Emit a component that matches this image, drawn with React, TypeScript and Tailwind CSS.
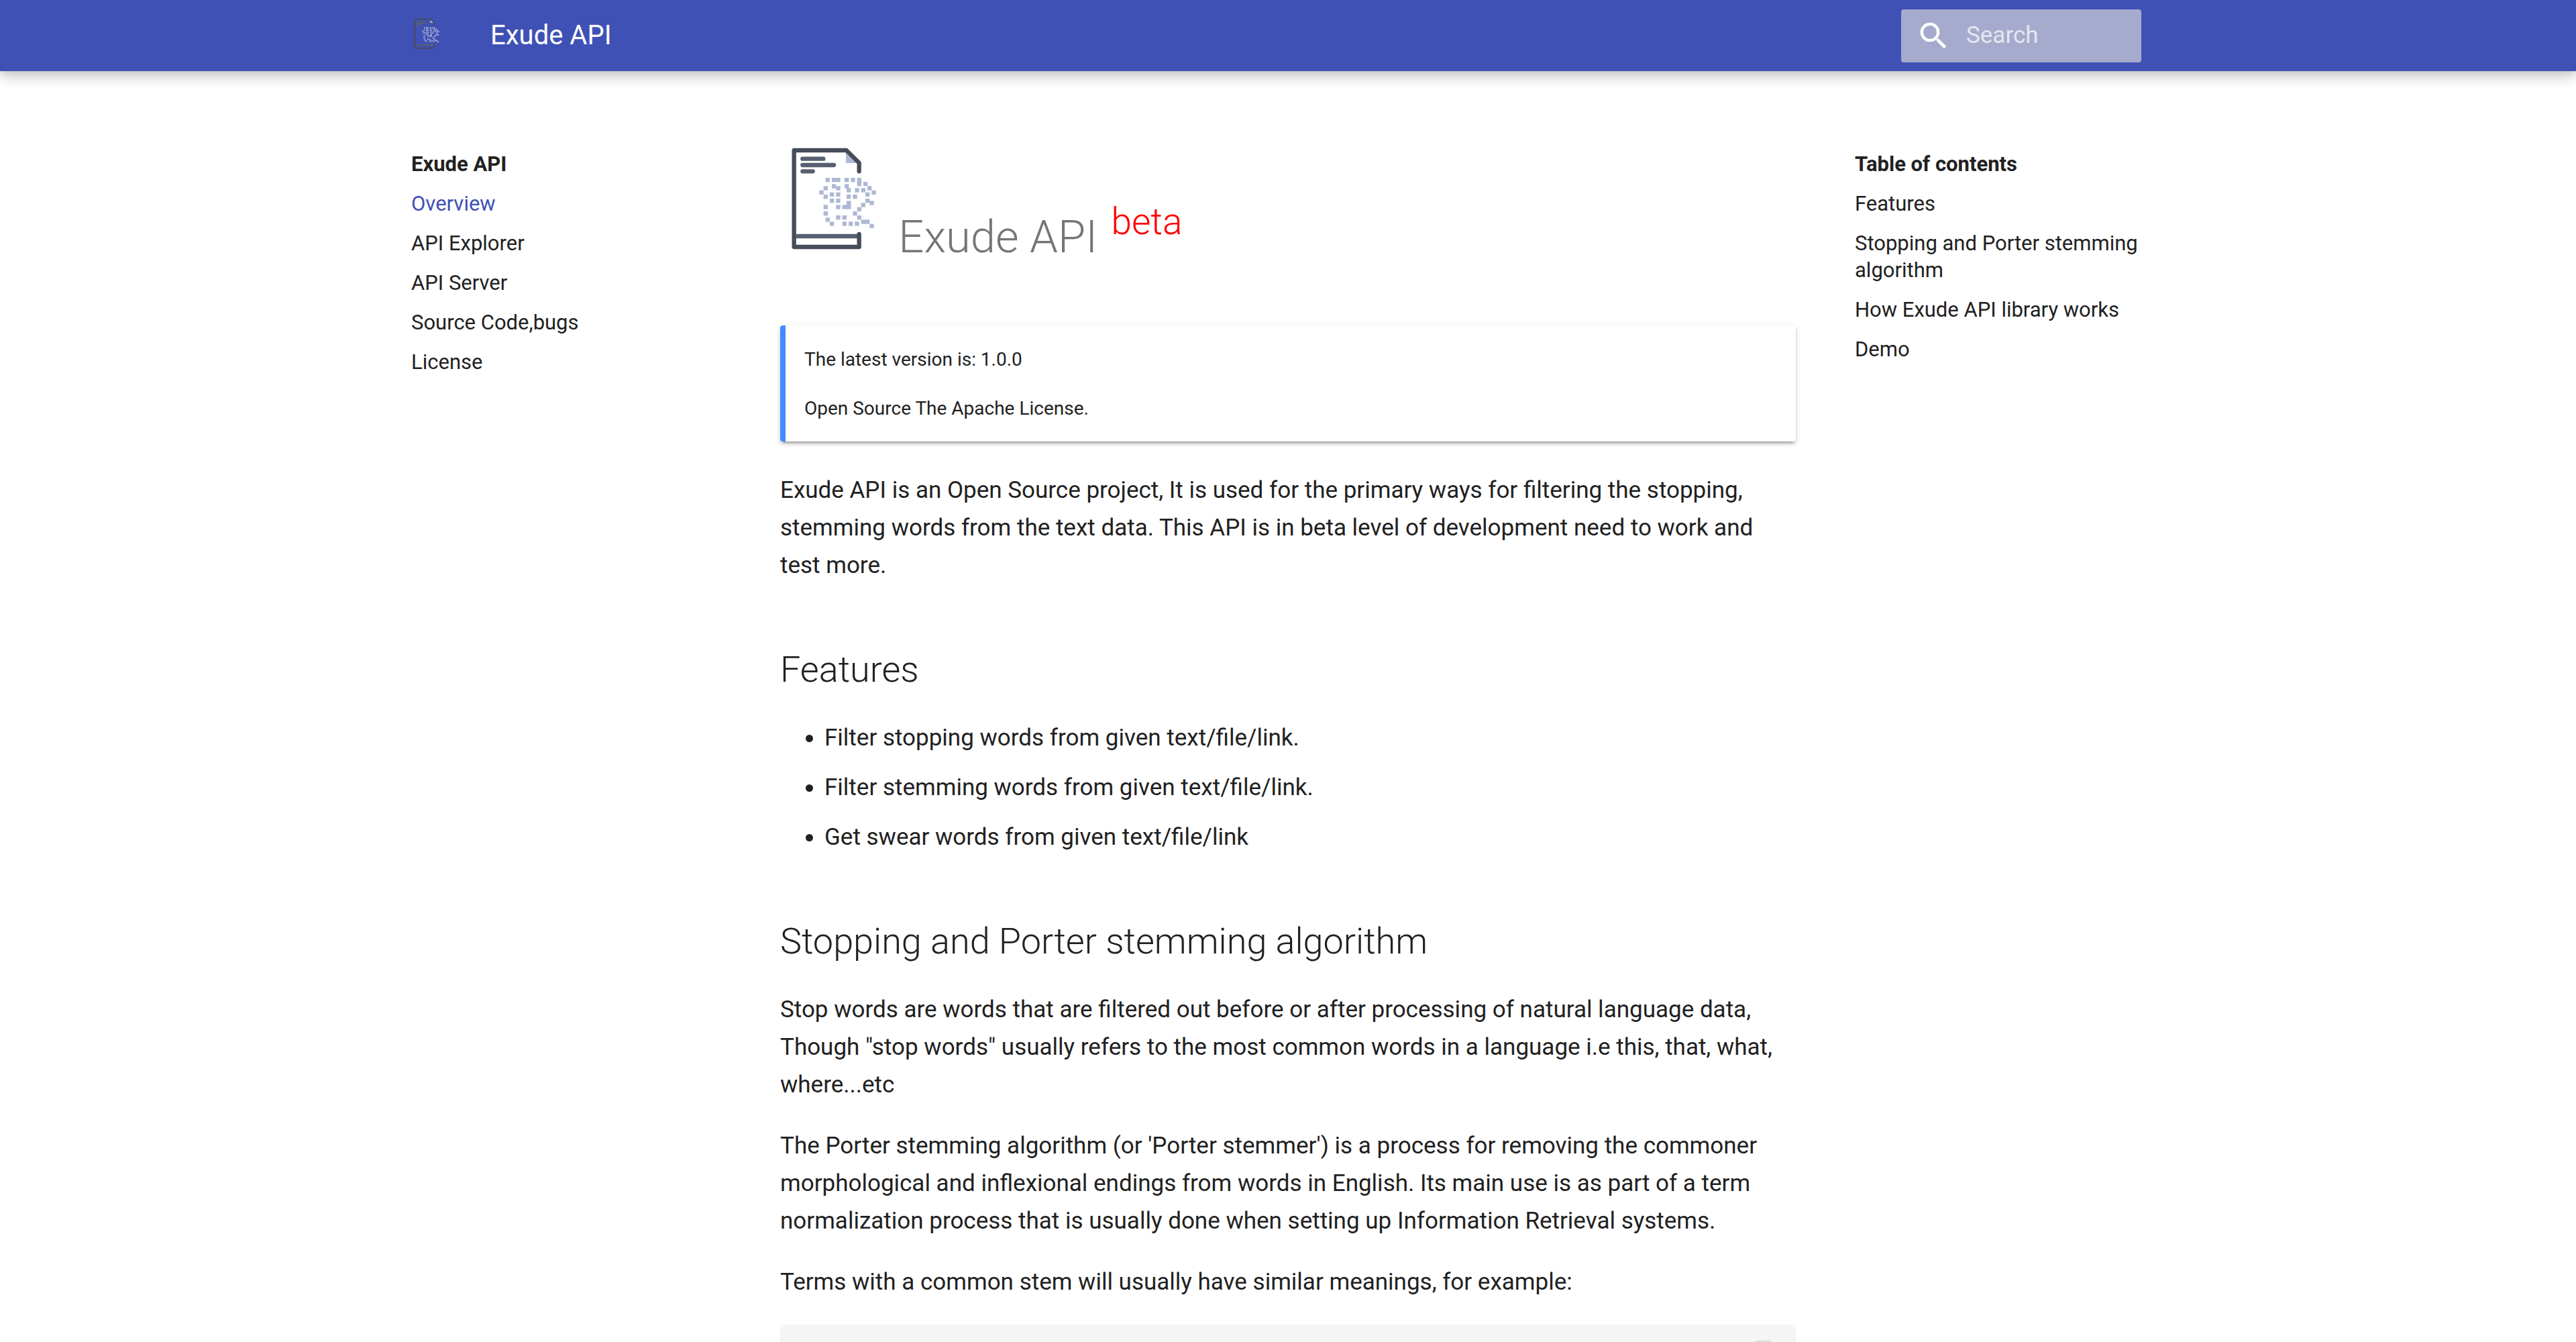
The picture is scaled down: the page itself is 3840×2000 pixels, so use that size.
import React from "react";

const dots: [number, number][] = [
  [251, 204], [279, 204], [298, 204], [336, 204], [364, 204], [392, 204],
  [392, 222], [420, 222],
  [279, 232], [336, 232],
  [242, 241], [298, 241], [438, 241],
  [345, 250], [382, 250], [410, 250],
  [223, 260], [457, 260],
  [270, 269], [298, 269], [429, 269],
  [242, 279], [345, 279], [373, 279],
  [270, 297], [298, 297], [429, 297],
  [345, 307], [448, 307],
  [345, 316], [410, 316],
  [242, 325], [298, 325], [326, 325], [345, 325],
  [392, 335],
  [242, 354], [373, 354],
  [298, 372], [326, 372], [392, 372],
  [251, 382],
  [410, 391], [429, 391],
  [270, 400], [326, 400], [354, 400], [382, 400],
  [448, 410],
];

function Logo({ className }: { className: string }) {
  return (
    <svg viewBox="39 48 480 480" className={className} role="img" aria-label="Exude logo">
      <path d="M333 82V129H388Z" fill="#aeb8d4" />
      <path d="M110 456H392" fill="none" stroke="#576070" strokeWidth="19" />
      <path
        d="M392 166V128L335 72H101V504H392V447"
        fill="none"
        stroke="#454c5a"
        strokeWidth="19"
        strokeLinecap="round"
        strokeLinejoin="round"
      />
      <path
        d="M139 110H232M139 138H279M139 166H185"
        fill="none"
        stroke="#576070"
        strokeWidth="19"
        strokeLinecap="round"
      />
      {dots.map(([x, y]) => (
        <rect key={`${x}-${y}`} x={x - 9} y={y - 9} width="19" height="19" fill="#aeb8d4" />
      ))}
    </svg>
  );
}

const pages = ["Overview", "API Explorer", "API Server", "Source Code,bugs", "License"];
const sections = [
  "Features",
  "Stopping and Porter stemming algorithm",
  "How Exude API library works",
  "Demo",
];

function SideNav({ title, items, active }: { title: string; items: string[]; active?: string }) {
  return (
    <nav aria-label={title} className="w-[532px] shrink-0 px-[35px] pt-[119px] text-[31px] leading-[40px]">
      <p className="font-bold">{title}</p>
      <ul>
        {items.map((item) => (
          <li key={item} className="mt-[19px]">
            <a href="#" className={item === active ? "text-[#4051b5]" : ""}>
              {item}
            </a>
          </li>
        ))}
      </ul>
    </nav>
  );
}

export default function App() {
  return (
    <div className="h-screen overflow-hidden bg-white font-['Roboto',sans-serif] text-[#212121]">
      <header className="relative bg-[#4051b5] text-white shadow-[0_0_9px_rgba(0,0,0,0.1),0_9px_18px_rgba(0,0,0,0.2)]">
        <div className="mx-auto flex h-[106px] max-w-[2684px] items-center pr-[70px] pl-[34px]">
          <a href="#" aria-label="Exude API home" className="pb-1.5">
            <Logo className="block size-[48px]" />
          </a>
          <span className="ml-[71px] text-[40px] leading-[48px]">Exude API</span>
          <label className="ml-auto flex h-[79px] w-[358px] items-center rounded-[4px] bg-[#a6abcd] pl-[22px]">
            <svg viewBox="0 0 24 24" className="size-[53px] shrink-0" fill="currentColor" aria-hidden="true">
              <path d="M9.5 3A6.5 6.5 0 0 1 16 9.5C16 11.11 15.41 12.59 14.44 13.73L14.71 14H15.5L20.5 19L19 20.5L14 15.5V14.71L13.73 14.44C12.59 15.41 11.11 16 9.5 16A6.5 6.5 0 0 1 3 9.5A6.5 6.5 0 0 1 9.5 3M9.5 5C7 5 5 7 5 9.5C5 12 7 14 9.5 14C12 14 14 12 14 9.5C14 7 12 5 9.5 5Z" />
            </svg>
            <input
              type="text"
              aria-label="Search"
              placeholder="Search"
              className="ml-[22px] w-full min-w-0 bg-transparent text-[35px] outline-none placeholder:text-[#e4e6f0]"
            />
          </label>
        </div>
      </header>

      <div className="mx-auto flex max-w-[2684px]">
        <SideNav title="Exude API" items={pages} active="Overview" />

        <main className="mx-[53px] min-w-0 flex-1 pt-[110px] text-[35px] leading-[56px]">
          <h1 className="mb-[86px] text-[67px] leading-[91px] font-light text-black/54">
            <Logo className="inline-block size-[160px] align-baseline" /> Exude API{" "}
            <sup className="ml-1 text-[55px] text-[#ff0000]">beta</sup>
          </h1>

          <div className="mb-[45px] flex flex-col gap-[28px] rounded-[4px] border-l-8 border-[#448aff] pt-[28px] pb-[27px] pl-[28px] text-[28px] leading-[45px] shadow-[0_4px_4px_rgba(0,0,0,0.14),0_2px_10px_rgba(0,0,0,0.12),0_6px_2px_-4px_rgba(0,0,0,0.2)]">
            <p>The latest version is: 1.0.0</p>
            <p>Open Source The Apache License.</p>
          </div>

          <p>
            Exude API is an Open Source project, It is used for the primary ways for filtering the
            stopping, stemming words from the text data. This API is in beta level of development
            need to work and test more.
          </p>

          <h2 className="mt-[88px] mb-[35px] text-[54px] leading-[78px] font-light">Features</h2>
          <ul className="ml-[66px] flex list-disc flex-col gap-[18px]">
            <li>Filter stopping words from given text/file/link.</li>
            <li>Filter stemming words from given text/file/link.</li>
            <li>Get swear words from given text/file/link</li>
          </ul>

          <h2 className="mt-[88px] mb-[35px] text-[54px] leading-[78px] font-light">
            Stopping and Porter stemming algorithm
          </h2>
          <p className="mb-[35px]">
            Stop words are words that are filtered out before or after processing of natural
            language data, Though "stop words" usually refers to the most common words in a
            language i.e this, that, what, where...etc
          </p>
          <p className="mb-[35px]">
            The Porter stemming algorithm (or 'Porter stemmer') is a process for removing the
            commoner morphological and inflexional endings from words in English. Its main use is as
            part of a term normalization process that is usually done when setting up Information
            Retrieval systems.
          </p>
          <p className="mb-[35px]">
            Terms with a common stem will usually have similar meanings, for example:
          </p>

          <div className="relative min-h-[200px] rounded-[4px] bg-[#f5f5f5]">
            <button
              type="button"
              aria-label="Copy to clipboard"
              className="absolute top-[22px] right-[24px] text-black/10"
            >
              <svg viewBox="0 0 24 24" className="size-[40px]" fill="currentColor" aria-hidden="true">
                <path d="M19 21H8V7H19M19 5H8A2 2 0 0 0 6 7V21A2 2 0 0 0 8 23H19A2 2 0 0 0 21 21V7A2 2 0 0 0 19 5M16 1H4A2 2 0 0 0 2 3V17H4V3H16V1Z" />
              </svg>
            </button>
          </div>
        </main>

        <SideNav title="Table of contents" items={sections} />
      </div>
    </div>
  );
}
